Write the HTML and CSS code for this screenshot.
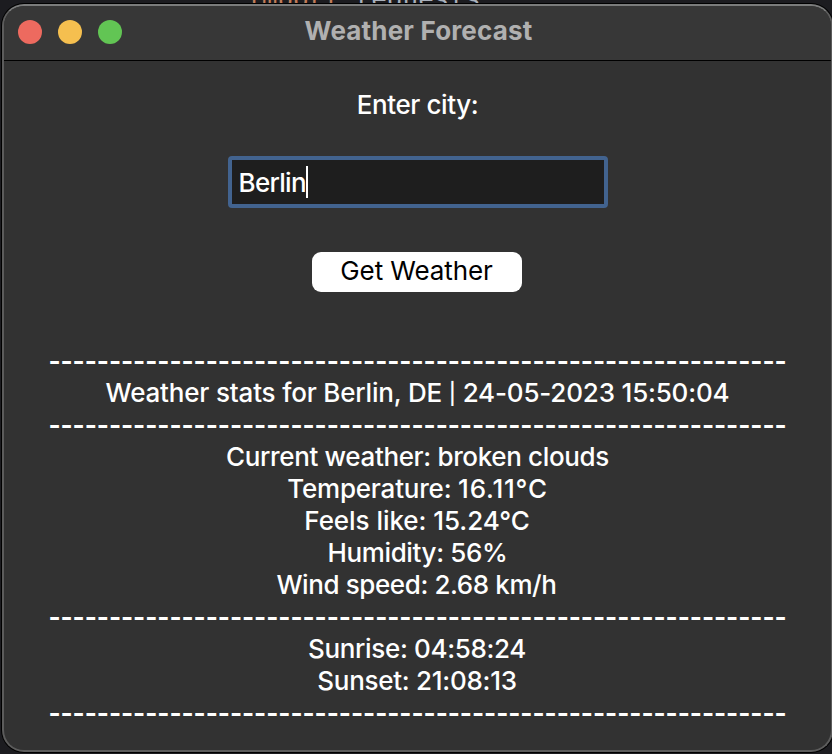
FILE: index.html
```html
<!DOCTYPE html>
<html lang="en">
<head>
<meta charset="utf-8">
<title>Weather Forecast</title>
<link rel="stylesheet" href="styles.css">
</head>
<body>
<div class="editor" aria-hidden="true"><span class="keyword">import</span> requests</div>
<main class="window">
  <header class="titlebar">
    <div class="controls"><i class="dot close"></i><i class="dot minimize"></i><i class="dot zoom"></i></div>
    <h1 class="title">Weather Forecast</h1>
  </header>
  <section class="content">
    <div class="label">Enter city:</div>
    <div class="field"><span class="value">Berlin</span><span class="caret"></span></div>
    <button class="button">Get Weather</button>
    <div class="report">
      <div class="rule">-------------------------------------------------------------</div>
      <div class="stats">Weather stats for Berlin, DE <span class="bar">|</span> 24-05-2023 15:50:04</div>
      <div class="rule">-------------------------------------------------------------</div>
      <div class="current">Current weather: broken clouds</div>
      <div class="temp">Temperature: <span class="degrees">16.11°C</span></div>
      <div class="feels">Feels like: 15.24°C</div>
      <div class="humidity">Humidity: 56%</div>
      <div class="wind">Wind speed: 2.68 km/h</div>
      <div class="rule">-------------------------------------------------------------</div>
      <div class="sunrise">Sunrise: 04:58:24</div>
      <div class="sunset">Sunset: 21:08:13</div>
      <div class="rule">-------------------------------------------------------------</div>
    </div>
  </section>
</main>
</body>
</html>
```
FILE: styles.css
```css
* { box-sizing: border-box; }
body {
  margin: 0;
  width: 832px;
  height: 754px;
  overflow: hidden;
  position: relative;
  background: #1c1c20;
  font: 500 26px/32px Inter, sans-serif;
  letter-spacing: -0.35px;
  color: #fff;
}
.editor {
  position: absolute;
  left: 246px;
  top: -15px;
  font: 26px/28px "DejaVu Sans Mono", monospace;
  letter-spacing: 0;
  color: #a9b0bb;
  white-space: pre;
}
.keyword { color: #c27c58; }
.window {
  position: relative;
  width: 831px;
  height: 748px;
  margin: 4px 0 0 2px;
  border: 2px solid #5c5c5c;
  border-top-color: #7b7c7c;
  border-radius: 22px;
  background: #323232;
  box-shadow: 0 0 0 1px #000;
  overflow: hidden;
}
.titlebar {
  height: 55px;
  display: flex;
  align-items: center;
  background: #373737;
  border-bottom: 1px solid #000;
}
.controls { display: flex; gap: 16px; width: 120px; padding: 0 0 2px 14px; }
.dot { width: 24px; height: 24px; border-radius: 50%; }
.close { background: #ed6a5f; }
.minimize { background: #f5bf4f; }
.zoom { background: #62c554; }
.title {
  flex: 1;
  margin: 0 118px 0 0;
  padding-bottom: 4px;
  text-align: center;
  font-size: 26px;
  line-height: 32px;
  font-weight: 700;
  letter-spacing: 0.17px;
  color: #b0b0b0;
}
.content {
  display: flex;
  flex-direction: column;
  align-items: center;
  padding-top: 28px;
}
.label { height: 32px; letter-spacing: -0.4px; }
.field {
  display: flex;
  align-items: center;
  width: 380px;
  height: 52px;
  margin-top: 35px;
  padding-left: 7px;
  border: 4px solid #42638f;
  border-radius: 4px;
  background: #1e1e1e;
}
.value { padding-top: 2px; letter-spacing: -0.7px; }
.caret { width: 2px; height: 32px; background: #fff; }
.button {
  width: 210px;
  height: 40px;
  margin: 44px 2px 0 0;
  padding: 0 0 2px;
  border: 0;
  border-radius: 9px;
  background: #fff;
  color: #000;
  font: inherit;
  font-weight: 400;
  letter-spacing: -0.1px;
}
.report {
  margin-top: 53px;
  display: flex;
  flex-direction: column;
  align-items: center;
  white-space: nowrap;
}
.rule { font-weight: 700; letter-spacing: -0.06px; }
.stats { letter-spacing: -0.18px; }
.bar { font-size: 21px; line-height: 1; vertical-align: 1px; }
.temp { letter-spacing: -0.2px; }
.degrees { letter-spacing: 0.8px; }
.feels { letter-spacing: -0.05px; padding-right: 1px; }
.wind { letter-spacing: -0.4px; padding-right: 2px; }
.sunrise { letter-spacing: -0.35px; padding-right: 1px; }
.sunset { letter-spacing: -0.28px; padding-right: 1px; }
```
